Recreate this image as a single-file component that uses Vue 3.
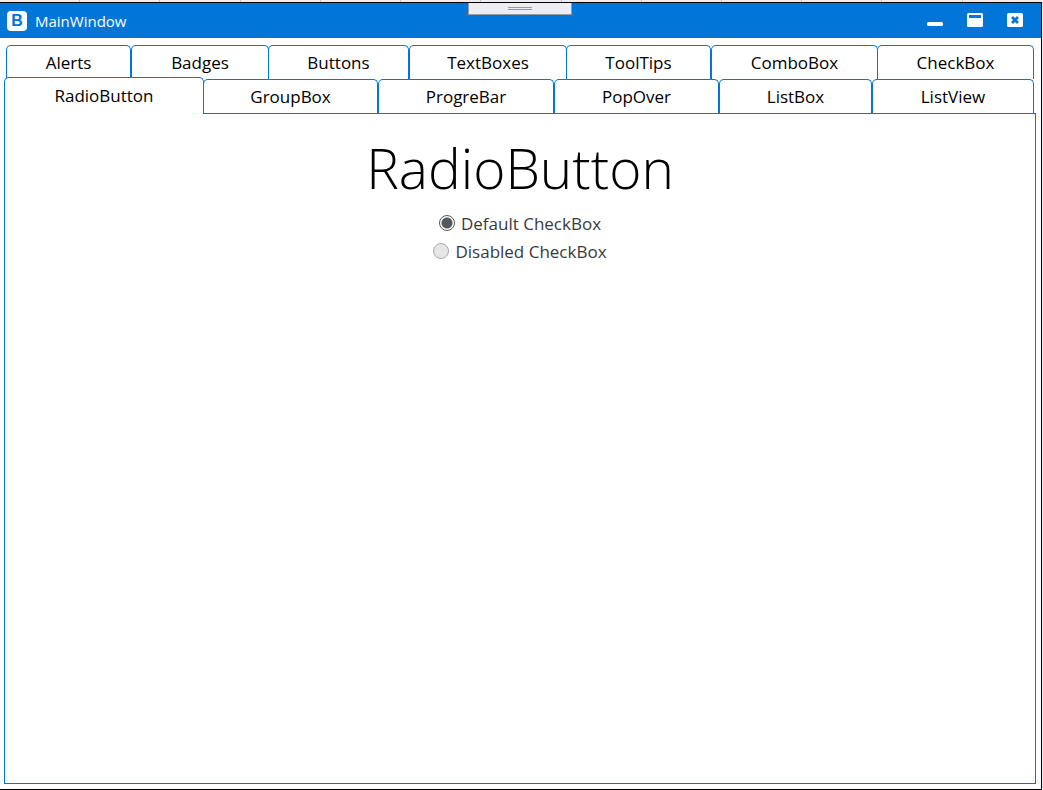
<script setup>
import { ref } from 'vue'

const upperTabs = [
  { name: 'Alerts' },
  { name: 'Badges' },
  { name: 'Buttons', joined: true },
  { name: 'TextBoxes' },
  { name: 'ToolTips', joined: true },
  { name: 'ComboBox' },
  { name: 'CheckBox', joined: true },
]
const lowerTabs = ['RadioButton', 'GroupBox', 'ProgreBar', 'PopOver', 'ListBox', 'ListView']
const choice = ref('default')
</script>

<template>
  <div class="desktop">
    <div class="ruler" aria-hidden="true">
      <i v-for="n in 12" :key="n"></i>
    </div>
    <div class="window">
      <header class="titlebar">
        <span class="logo">B</span>
        <span class="title">MainWindow</span>
        <div class="controls">
          <button type="button" aria-label="Minimize">
            <svg width="16" height="16" viewBox="0 0 16 16"><rect y="9" width="16" height="4" rx="1.5" fill="#fff" /></svg>
          </button>
          <button type="button" aria-label="Maximize">
            <svg width="16" height="16" viewBox="0 0 16 16">
              <rect width="16" height="14" rx="1.5" fill="#fff" />
              <rect x="2" y="2" width="12" height="3" fill="#0275d8" />
            </svg>
          </button>
          <button type="button" aria-label="Close">
            <svg width="16" height="16" viewBox="0 0 16 16">
              <rect width="16" height="14" rx="1.5" fill="#fff" />
              <path d="M5 4l6 6M11 4l-6 6" stroke="#0275d8" stroke-width="2.8" />
            </svg>
          </button>
        </div>
        <div class="grip"><span></span></div>
      </header>

      <main class="body">
        <div class="tabs" role="tablist">
          <div class="row upper">
            <button v-for="t in upperTabs" :key="t.name" type="button" role="tab" class="tab" :class="{ joined: t.joined }">{{ t.name }}</button>
          </div>
          <div class="row lower">
            <button v-for="(t, i) in lowerTabs" :key="t" type="button" role="tab" class="tab" :class="{ selected: i === 0 }" :aria-selected="i === 0">{{ t }}</button>
          </div>
        </div>
        <section class="panel" role="tabpanel">
          <h1>RadioButton</h1>
          <label class="option"><input v-model="choice" type="radio" name="choice" value="default" />Default CheckBox</label>
          <label class="option"><input v-model="choice" type="radio" name="choice" value="disabled" disabled />Disabled CheckBox</label>
        </section>
      </main>
    </div>
  </div>
</template>

<style>
body {
  margin: 0;
}
</style>

<style scoped>
.desktop {
  box-sizing: border-box;
  min-height: 100vh;
  padding-right: 1px;
  display: flex;
  flex-direction: column;
  background: #eeeef2;
  font-family: "Open Sans", "Noto Sans", sans-serif;
}
.ruler {
  height: 2px;
  display: flex;
  justify-content: space-evenly;
}
.ruler i {
  width: 1px;
  background: #c4c5cc;
}
.window {
  flex: 1;
  display: flex;
  flex-direction: column;
  border: 1px solid #000;
  border-left: 0;
  background: #fff;
}
.titlebar {
  position: relative;
  height: 35px;
  padding: 0 18px 0 7px;
  display: flex;
  align-items: center;
  background: #0275d8;
  color: #fff;
}
.logo {
  width: 20px;
  height: 20px;
  border-radius: 4px;
  background: #fff;
  color: #0275d8;
  font: bold 16px/20px "Liberation Sans", sans-serif;
  text-align: center;
}
.title {
  margin-left: 8px;
  font-size: 15px;
}
.controls {
  margin-left: auto;
  display: flex;
  gap: 24px;
}
.controls button {
  padding: 0;
  border: 0;
  background: none;
}
.controls svg {
  display: block;
}
.grip {
  position: absolute;
  top: 0;
  left: 50%;
  width: 102px;
  height: 11px;
  transform: translateX(-53px);
  border: 1px solid #999;
  border-top: 0;
  background: #eeeef2;
  display: flex;
  justify-content: center;
}
.grip span {
  width: 24px;
  height: 1px;
  margin-top: 4px;
  border: solid #999;
  border-width: 1px 0;
}
.body {
  flex: 1;
  display: flex;
  flex-direction: column;
  padding: 7px 5px 5px 4px;
}
.tabs {
  padding: 0 2px;
}
.row {
  display: grid;
  grid-template-rows: 34px;
}
.upper {
  grid-template-columns: 125fr 138fr 140fr 158fr 144fr 167fr 156fr;
}
.lower {
  grid-template-columns: 197fr 175fr 176fr 165fr 153fr 162fr;
}
.tab {
  min-width: 0;
  padding: 0;
  border: 1px solid #0275d8;
  border-bottom: 0;
  border-radius: 5px 5px 0 0;
  background: #fff;
  color: #000;
  font: 400 17px/32px "Open Sans", "Noto Sans", sans-serif;
}
.joined {
  margin-left: -1px;
}
.selected {
  z-index: 1;
  margin: -2px -1px -1px -2px;
}
.panel {
  flex: 1;
  border: 1px solid #0275d8;
  display: flex;
  flex-direction: column;
  align-items: center;
}
h1 {
  margin: 18px 0 5px;
  color: #000;
  font-size: 55px;
  line-height: 72px;
  font-weight: 300;
}
.option {
  display: flex;
  align-items: center;
  gap: 6px;
  height: 28px;
  color: #373a3c;
  font-size: 17px;
}
.option input {
  appearance: none;
  box-sizing: border-box;
  width: 16px;
  height: 16px;
  margin: 0;
  border: 1px solid #55595c;
  border-radius: 50%;
  background: #fff;
}
.option input:checked {
  background: radial-gradient(circle, #55595c 5px, #fff 6px);
}
.option input:disabled {
  border-color: #aaa;
  background: #e6e6e6;
}
</style>
